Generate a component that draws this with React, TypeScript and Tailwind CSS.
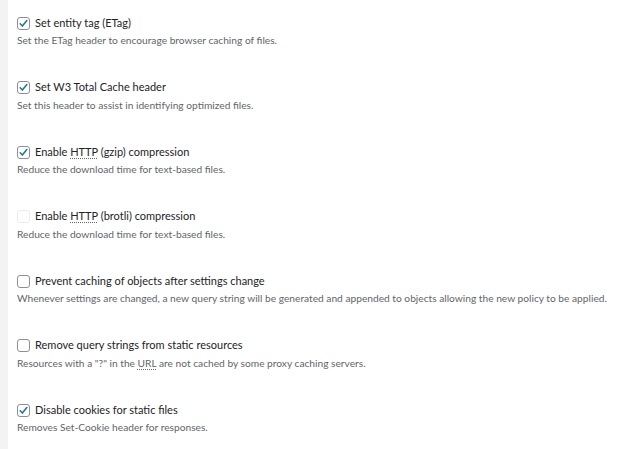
import React from 'react'

type Item = {
  label: React.ReactNode
  desc: React.ReactNode
  checked: boolean
  disabled?: boolean
}

function Abbr({ children }: { children: React.ReactNode }) {
  return (
    <span className="underline decoration-dotted decoration-[#646970] underline-offset-2">{children}</span>
  )
}

function Checkbox({ checked, disabled }: { checked: boolean; disabled?: boolean }) {
  return (
    <span
      className={`flex items-center justify-center w-[13px] h-[13px] rounded-[3px] border bg-white shrink-0 ${
        disabled ? 'border-[#ebebec]' : 'border-[#8c8f94]'
      }`}
    >
      {checked && (
        <svg width="11" height="11" viewBox="0 0 20 20" fill="none">
          <path d="M4 10.5l4 4.2L16 4.5" stroke="#2271b1" strokeWidth="2.8" strokeLinecap="round" strokeLinejoin="round" />
        </svg>
      )}
    </span>
  )
}

const items: Item[] = [
  { label: 'Set entity tag (ETag)', desc: 'Set the ETag header to encourage browser caching of files.', checked: true },
  { label: 'Set W3 Total Cache header', desc: 'Set this header to assist in identifying optimized files.', checked: true },
  { label: <>Enable <Abbr>HTTP</Abbr> (gzip) compression</>, desc: 'Reduce the download time for text-based files.', checked: true },
  { label: <>Enable <Abbr>HTTP</Abbr> (brotli) compression</>, desc: 'Reduce the download time for text-based files.', checked: false, disabled: true },
  {
    label: 'Prevent caching of objects after settings change',
    desc: 'Whenever settings are changed, a new query string will be generated and appended to objects allowing the new policy to be applied.',
    checked: false,
  },
  {
    label: 'Remove query strings from static resources',
    desc: <>Resources with a "?" in the <Abbr>URL</Abbr> are not cached by some proxy caching servers.</>,
    checked: false,
  },
  { label: 'Disable cookies for static files', desc: 'Removes Set-Cookie header for responses.', checked: true },
]

export default function App() {
  return (
    <div className="flex h-[449px] w-full bg-white overflow-hidden" style={{ fontFamily: 'Lato, "Noto Sans", sans-serif' }}>
      <div className="w-[8px] bg-[#f3f3f4] shrink-0" />
      <div className="flex-1 pl-[9px] pt-[14px]">
        {items.map((item, i) => (
          <div key={i} className="h-[64.5px]">
            <label className="flex items-center gap-[5px] h-[18px] text-[11px] text-[#1d2327]">
              <Checkbox checked={item.checked} disabled={item.disabled} />
              <span>{item.label}</span>
            </label>
            <p className="text-[10.2px] leading-[16px] text-[#5f656b] whitespace-nowrap">{item.desc}</p>
          </div>
        ))}
      </div>
    </div>
  )
}
